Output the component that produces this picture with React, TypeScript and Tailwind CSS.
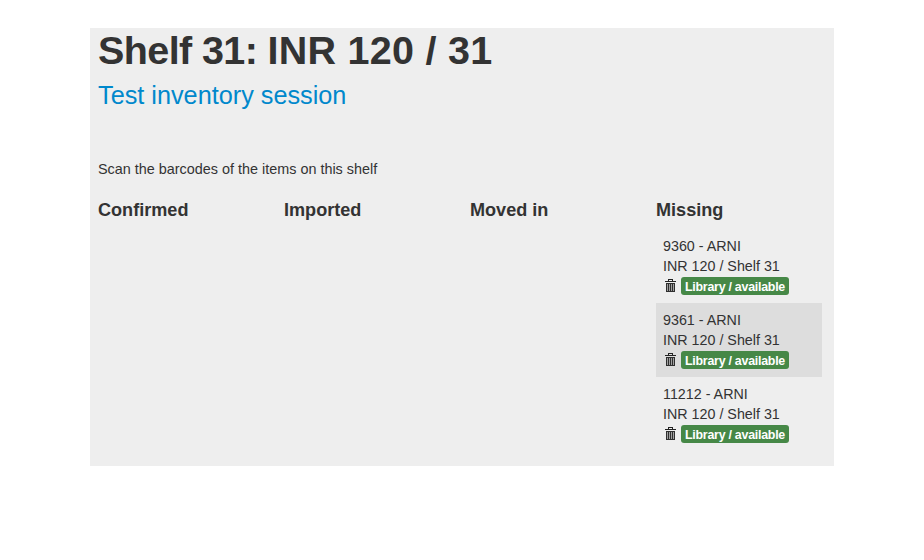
const items = ['9360 - ARNI', '9361 - ARNI', '11212 - ARNI'];

function Trash() {
  return (
    <svg className="mb-px ml-[2px] h-[13px] w-[11px] shrink-0" viewBox="0 0 11 13" shapeRendering="crispEdges" aria-hidden="true">
      <path d="M3 0h5v2h3v1H0V2h3zM4 1v1h3V1z" fill="#222" fillRule="evenodd" />
      <path d="M1 4h9v9H1z" fill="#2f2f2f" />
      <path d="M2 5h1v7H2zM4 5h1v7H4zM6 5h1v7H6zM8 5h1v7H8z" fill="#a0a0a0" />
    </svg>
  );
}

function Item({ title }: { title: string }) {
  return (
    <li className="h-[74px] w-[166px] p-[7px] text-[14.3px] leading-5 even:bg-[#ddd]">
      <div className="whitespace-nowrap">{title}</div>
      <div className="whitespace-nowrap">INR 120 / Shelf 31</div>
      <div className="flex h-5 items-center gap-[5px]">
        <Trash />
        <span className="flex h-[18px] w-[108px] items-center justify-center whitespace-nowrap rounded-[3px] bg-[#468847] pt-[2px] text-[12.4px] font-bold leading-[14px] tracking-[-0.25px] text-white">
          Library / available
        </span>
      </div>
    </li>
  );
}

function Column({ title, rows = [] }: { title: string; rows?: string[] }) {
  return (
    <section className="w-[186px] shrink-0">
      <h3 className="h-10 pt-px text-[18.1px] font-bold leading-10">{title}</h3>
      <ul>
        {rows.map((row) => <Item key={row} title={row} />)}
      </ul>
    </section>
  );
}

export default function App() {
  return (
    <div className="h-[560px] w-[924px] bg-white pt-7 font-['Liberation_Sans',Arial,sans-serif] text-[#333]">
      <main className="mx-auto h-[438px] w-[744px] bg-[#eee] pl-2">
        <h1 className="h-[47px] whitespace-nowrap text-[39.5px] font-bold leading-[45px]">
          <span className="tracking-[-0.6px]">Shelf 31: </span>
          <span className="tracking-[0.25px]">INR 120 / 31</span>
        </h1>
        <h2 className="h-[84px] whitespace-nowrap text-[25.25px] leading-10 text-[#0088cc]">Test inventory session</h2>
        <p className="h-[30px] whitespace-nowrap text-[14.4px] leading-5">Scan the barcodes of the items on this shelf</p>
        <div className="flex">
          <Column title="Confirmed" />
          <Column title="Imported" />
          <Column title="Moved in" />
          <Column title="Missing" rows={items} />
        </div>
      </main>
    </div>
  );
}
